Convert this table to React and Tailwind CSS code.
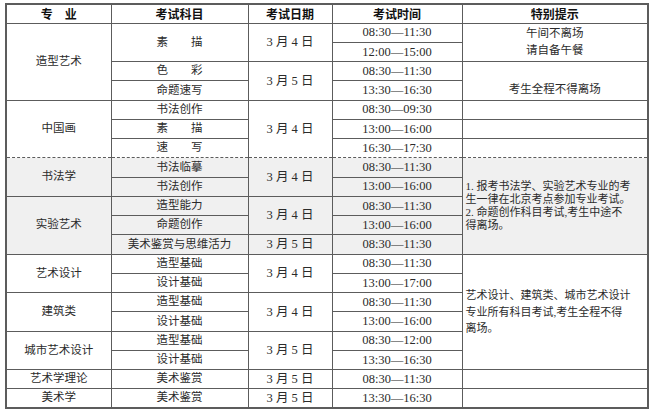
import React from 'react';

const rows = [
    { time: '08:30—11:30' },
    { time: '12:00—15:00' },
    { time: '08:30—11:30' },
    { time: '13:30—16:30' },
    { time: '08:30—09:30' },
    { time: '13:00—16:00' },
    { time: '16:30—17:30' },
    { time: '08:30—11:30' },
    { time: '13:00—16:00' },
    { time: '08:30—11:30' },
    { time: '13:00—16:00' },
    { time: '08:30—11:30' },
    { time: '08:30—11:30' },
    { time: '13:00—17:00' },
    { time: '08:30—11:30' },
    { time: '13:00—16:00' },
    { time: '08:30—12:00' },
    { time: '13:30—16:30' },
    { time: '08:30—11:30' },
    { time: '13:30—16:30' },
];

// which cells start on each row (col1, col2, col3, col5)
const major = {
    0: ['造型艺术', 4], 4: ['中国画', 3], 7: ['书法学', 2], 9: ['实验艺术', 3],
    12: ['艺术设计', 2], 14: ['建筑类', 2], 16: ['城市艺术设计', 2], 18: ['艺术学理论', 1], 19: ['美术学', 1],
};
const subject = {
    0: ['素　　描', 2], 2: ['色　　彩', 1], 3: ['命题速写', 1], 4: ['书法创作', 1], 5: ['素　　描', 1],
    6: ['速　　写', 1], 7: ['书法临摹', 1], 8: ['书法创作', 1], 9: ['造型能力', 1], 10: ['命题创作', 1],
    11: ['美术鉴赏与思维活力', 1], 12: ['造型基础', 1], 13: ['设计基础', 1], 14: ['造型基础', 1],
    15: ['设计基础', 1], 16: ['造型基础', 1], 17: ['设计基础', 1], 18: ['美术鉴赏', 1], 19: ['美术鉴赏', 1],
};
const dates = {
    0: ['3 月 4 日', 2], 2: ['3 月 5 日', 2], 4: ['3 月 4 日', 3], 7: ['3 月 4 日', 2], 9: ['3 月 4 日', 2],
    11: ['3 月 5 日', 1], 12: ['3 月 4 日', 2], 14: ['3 月 4 日', 2], 16: ['3 月 5 日', 2],
    18: ['3 月 5 日', 1], 19: ['3 月 5 日', 1],
};

const tips = {
    0: [2, (
        <div className="text-center leading-[17px]">午间不离场<br />请自备午餐</div>
    )],
    2: [2, (
        <div className="text-center pt-[17px]">考生全程不得离场</div>
    )],
    4: [1, null],
    5: [1, null],
    6: [1, null],
    7: [5, (
        <div className="text-left pl-[3px] text-[11px] leading-[13px] whitespace-nowrap">
            1. 报考书法学、实验艺术专业的考<br />
            生一律在北京考点参加专业考试。<br />
            2. 命题创作科目考试,考生中途不<br />
            得离场。
        </div>
    )],
    12: [6, (
        <div className="text-left pl-[3px] text-[11px] leading-[16.5px] whitespace-nowrap">
            艺术设计、建筑类、城市艺术设计<br />
            专业所有科目考试,考生全程不得<br />
            离场。
        </div>
    )],
    18: [1, null],
    19: [1, null],
};

const cell = 'border border-[#5c5c5c] p-0 text-center align-middle';
const shaded = i => (i >= 7 && i <= 11 ? 'bg-[#f0f0f0]' : '');
// dashed line above 书法学
const dashTop = i => (i === 7 ? '[border-top-style:dashed]' : '');
const dashBottom = (i, span) => (i + span === 7 ? '[border-bottom-style:dashed]' : '');

export default function App() {
    return (
        <div className="w-[658px] h-[414px] bg-white pt-[3px] pl-[5px] overflow-hidden"
            style={{ fontFamily: '"Liberation Serif", "Noto Sans CJK SC", serif' }}>
            <table className="border-collapse border-2 border-[#5c5c5c] text-[11.5px] leading-none text-[#2b2b2b] table-fixed w-[642px]">
                <colgroup>
                    <col className="w-[105px]" />
                    <col className="w-[137px]" />
                    <col className="w-[84px]" />
                    <col className="w-[130px]" />
                    <col className="w-[186px]" />
                </colgroup>
                <thead>
                    <tr className="h-[19px]">
                        {['专　业', '考试科目', '考试日期', '考试时间', '特别提示'].map(h => (
                            <th key={h} className={`${cell} font-bold text-[#111] text-[12px]`}
                                style={{ fontFamily: '"Noto Sans CJK SC", sans-serif' }}>
                                {h}
                            </th>
                        ))}
                    </tr>
                </thead>
                <tbody>
                    {rows.map((r, i) => (
                        <tr key={i} className="h-[19.25px]">
                            {major[i] && (
                                <td rowSpan={major[i][1]} className={`${cell} ${shaded(i)} ${dashTop(i)} ${dashBottom(i, major[i][1])}`}>
                                    {major[i][0]}
                                </td>
                            )}
                            {subject[i] && (
                                <td rowSpan={subject[i][1]} className={`${cell} ${shaded(i)} ${dashTop(i)} ${dashBottom(i, subject[i][1])}`}>
                                    {subject[i][0]}
                                </td>
                            )}
                            {dates[i] && (
                                <td rowSpan={dates[i][1]} className={`${cell} ${shaded(i)} ${dashTop(i)} ${dashBottom(i, dates[i][1])} text-[12.5px]`}>
                                    {dates[i][0]}
                                </td>
                            )}
                            <td className={`${cell} ${shaded(i)} ${dashTop(i)} ${dashBottom(i, 1)} text-[12.5px]`}>
                                {r.time}
                            </td>
                            {tips[i] && (
                                <td rowSpan={tips[i][0]} className={`${cell} ${shaded(i)} ${dashTop(i)} ${dashBottom(i, tips[i][0])}`}>
                                    {tips[i][1]}
                                </td>
                            )}
                        </tr>
                    ))}
                </tbody>
            </table>
        </div>
    );
}
